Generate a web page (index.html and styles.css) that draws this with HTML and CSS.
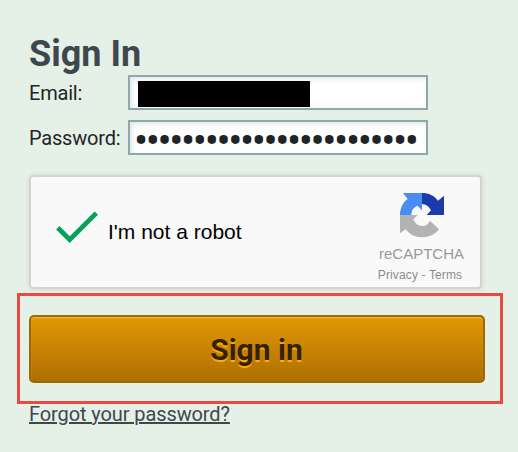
FILE: index.html
```html
<!DOCTYPE html>
<html lang="en">

<head>
    <meta charset="UTF-8">
    <meta name="viewport" content="width=device-width, initial-scale=1.0">
    <title>Sign In</title>
    <link rel="stylesheet" href="styles.css">
</head>

<body>
    <form class="signin">
        <h1>Sign In</h1>
        <div class="row">
            <label for="email">Email:</label>
            <div class="field" id="email"><span class="redacted"></span></div>
        </div>
        <div class="row">
            <label for="password">Password:</label>
            <input class="field" type="password" id="password" value="abcdefghijklmnopqrstuvwx">
        </div>

        <div class="captcha">
            <svg class="check" width="46" height="36" viewBox="0 0 46 36">
                <path d="M3.8 18.8 L15.7 30.7 L42.3 4.1" fill="none" stroke="#06a05b" stroke-width="4.8" />
            </svg>
            <span class="robot">I'm not a robot</span>
            <div class="brand">
                <svg width="55" height="55" viewBox="0 0 165 165">
                    <path fill="#1c3aa9" d="M81 15 C101 15 118 23 129 38 L147 23 V81 H95 L108 67 C102 55 93 48 81 48 Z" />
                    <path fill="#4a8cf5" d="M81 15 V67 L67 53 C56 58 49 67 49 81 H15 C15 61 23 44 38 33 L24 15 Z" />
                    <path fill="#b3b3b3" d="M15 81 H68 L55 94 C60 107 70 114 82 114 C93 114 100 108 105 98 L132 124 C120 140 102 148 81 148 C61 148 43 139 32 124 L15 136 Z" />
                </svg>
                <div class="name">reCAPTCHA</div>
                <div class="terms">Privacy - Terms</div>
            </div>
        </div>

        <div class="highlight">
            <button type="button">Sign in</button>
        </div>
        <a class="forgot" href="#">Forgot your password?</a>
    </form>
</body>

</html>
```
FILE: styles.css
```css
* {
    margin: 0;
    padding: 0;
    box-sizing: border-box;
}

body {
    background: #e5f0e6;
    font-family: Roboto, sans-serif;
    font-size: 20px;
    color: #1e2526;
}

.signin {
    width: 518px;
    height: 452px;
    padding: 33px 0 0 29px;
}

h1 {
    height: 42px;
    line-height: 42px;
    font-size: 36px;
    font-weight: bold;
    color: #3f474e;
}

.row {
    display: flex;
    height: 35px;
    margin-bottom: 10px;
}

.row label {
    width: 99px;
    line-height: 36px;
    letter-spacing: -0.2px;
}

.field {
    width: 300px;
    height: 35px;
    padding: 4px 8px;
    background: #fff;
    border: 2px solid #8fa9ab;
    box-shadow: inset 2px 2px 5px #dfe7ea;
    color: #1e2526;
    outline: none;
}

input.field {
    padding: 5px 3px 0 4px;
    font-family: Roboto, sans-serif;
    font-size: 42px;
    letter-spacing: -2.4px;
}

.redacted {
    display: block;
    width: 172px;
    height: 26px;
    background: #000;
}

.captcha {
    display: flex;
    width: 453px;
    height: 114px;
    margin-top: 20px;
    padding-left: 23px;
    background: #f9f9f9;
    border: 2px solid #d3d3d3;
    border-radius: 4px;
    box-shadow: 0 0 5px rgba(0, 0, 0, 0.1);
    font-family: "Liberation Sans", Arial, sans-serif;
}

.check {
    margin-top: 32px;
}

.robot {
    width: 255px;
    margin-left: 8px;
    line-height: 109px;
    font-size: 21px;
    color: #000;
    white-space: nowrap;
}

.brand {
    width: 117px;
    padding-top: 11px;
    text-align: center;
    color: #999;
}

.brand svg {
    display: block;
    margin: 0 0 0 32px;
}

.brand .name {
    margin-top: 2px;
    line-height: 18px;
    font-size: 15px;
}

.brand .terms {
    margin: 5px 3px 0 0;
    line-height: 14px;
    font-size: 12px;
    letter-spacing: 0.13px;
    color: #8c8c8c;
}

.highlight {
    width: 486px;
    height: 111px;
    margin: 4px 0 0 -12px;
    padding: 19px 9px;
    border: 3px solid #ea4a42;
}

button {
    display: block;
    width: 456px;
    height: 68px;
    padding-right: 1px;
    background: linear-gradient(#e29805, #ad6f00);
    border: 2px solid #a06805;
    border-radius: 5px;
    box-shadow: inset 0 1px 1px #f5b84a;
    font-family: Roboto, sans-serif;
    font-size: 30px;
    font-weight: bold;
    color: #332100;
    text-shadow: 0 2px 0 #ffa90a;
}

.forgot {
    display: block;
    line-height: 20px;
    letter-spacing: -0.1px;
    color: #3f474e;
    text-decoration-thickness: 2px;
}
```
